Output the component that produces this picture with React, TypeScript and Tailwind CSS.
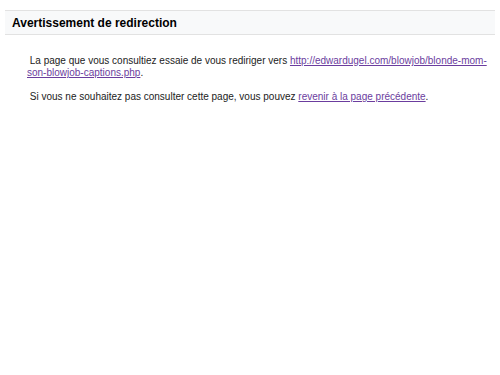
import React from "react";

export default function App() {
  const url = "http://edwardugel.com/blowjob/blonde-mom-son-blowjob-captions.php";
  return (
    <div
      className="w-[500px] h-[375px] bg-white text-[#222]"
      style={{ fontFamily: '"Liberation Sans", Arial, sans-serif' }}
    >
      <div className="pt-[10px] px-[5px]">
        <div className="h-[25px] border-y border-[#e2e2e2] bg-[#f8f9fa] flex items-center pl-[7px]">
          <h1 className="text-[12px] font-bold text-black leading-none">
            Avertissement de redirection
          </h1>
        </div>
      </div>
      <div className="pl-[27px] pr-[8px] pt-[20px] text-[10px] leading-[12px]">
        <p>
          {"\u00a0"}La page que vous consultiez essaie de vous rediriger vers{" "}
          <a href="#" className="text-[#6b3d9e] underline">
            {url}
          </a>
          .
        </p>
        <p className="mt-[12px]">
          {"\u00a0"}Si vous ne souhaitez pas consulter cette page, vous pouvez{" "}
          <a href="#" className="text-[#6b3d9e] underline">
            revenir à la page précédente
          </a>
          .
        </p>
      </div>
    </div>
  );
}
